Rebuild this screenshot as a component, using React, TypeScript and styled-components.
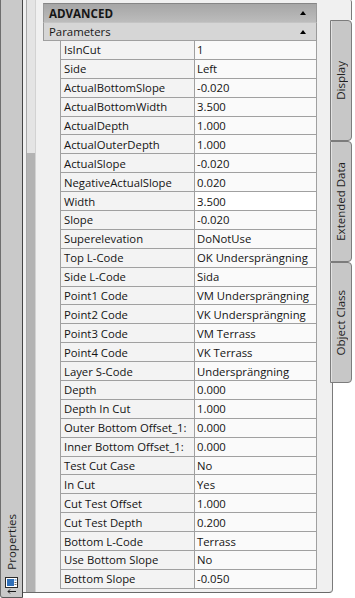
import React from 'react';
import styled, { createGlobalStyle } from 'styled-components';

const Global = createGlobalStyle`
  html, body { margin: 0; padding: 0; background: #ffffff; }
  body { font-family: "Open Sans", "Noto Sans", sans-serif; }
  * { box-sizing: border-box; }
`;

const Frame = styled.div`
  display: flex;
  width: 355px;
  height: 598px;
  overflow: hidden;
  background: #ffffff;
`;

const LeftStrip = styled.div`
  width: 23px;
  height: 598px;
  flex: none;
  background: #c9c9c9;
  border-left: 1px solid #6e6e6e;
  border-right: 1px solid #454545;
  border-bottom: 1px solid #5a5a5a;
  border-bottom-left-radius: 3px;
  display: flex;
  flex-direction: column;
  align-items: center;
  justify-content: flex-end;
  gap: 7px;
  padding-bottom: 3px;
`;

const VerticalLabel = styled.span`
  writing-mode: vertical-rl;
  transform: rotate(180deg);
  font-size: 11.5px;
  line-height: 14px;
  color: #1e1e1e;
`;

const Panel = styled.div`
  width: 310px;
  height: 593px;
  flex: none;
  background: #f0f0f0;
  border-right: 1px solid #7a7a7a;
  border-bottom: 1px solid #6a6a6a;
  border-bottom-right-radius: 4px;
  display: flex;
  padding-left: 3px;
`;

const ScrollTrack = styled.div`
  width: 10px;
  height: 592px;
  flex: none;
  margin-right: 7px;
  background: #e4e4e4;
  border-left: 1px solid #a8a8a8;
  border-right: 1px solid #d2d2d2;
  display: flex;
  flex-direction: column;
  padding-top: 153px;
`;

const ScrollThumb = styled.div`
  flex: 1;
  background: #b3b3b3;
`;

const Content = styled.div`
  width: 274px;
  flex: none;
  padding-top: 3px;
  display: flex;
  flex-direction: column;
`;

const SectionHeader = styled.div<{ $main?: boolean }>`
  height: 19px;
  display: flex;
  align-items: center;
  justify-content: space-between;
  padding: 0 10px 0 5px;
  font-size: ${p => (p.$main ? '11.6px' : '11.4px')};
  color: #161616;
  font-weight: ${p => (p.$main ? 700 : 400)};
  background: ${p => (p.$main ? 'linear-gradient(#a6a6a6, #bcbcbc)' : '#d6d6d6')};
  border-left: 1px solid #9a9a9a;
  border-right: 1px solid #9a9a9a;
  border-top: ${p => (p.$main ? '1px solid #858585' : '1px solid #c4c4c4')};
  border-bottom: ${p => (p.$main ? 'none' : '1px solid #a0a0a0')};
`;

const Caret = styled.span`
  width: 0;
  height: 0;
  border-left: 3.5px solid transparent;
  border-right: 3.5px solid transparent;
  border-bottom: 4px solid #000000;
`;

const Row = styled.div`
  display: flex;
  height: 18.9px;
  font-size: 11.3px;
  color: #141414;
`;

const Indent = styled.div`
  width: 17px;
  flex: none;
`;

const NameCell = styled.div`
  width: 134px;
  flex: none;
  background: #f3f3f3;
  border-left: 1px solid #a0a0a0;
  border-bottom: 1px solid #a0a0a0;
  padding-left: 3px;
  display: flex;
  align-items: center;
  white-space: nowrap;
  overflow: hidden;
`;

const ValueCell = styled.div<{ $bright?: boolean }>`
  flex: 1;
  background: ${p => (p.$bright ? '#ffffff' : '#fafafa')};
  border-left: 1px solid #a0a0a0;
  border-right: 1px solid #a0a0a0;
  border-bottom: 1px solid #a0a0a0;
  padding-left: 2px;
  display: flex;
  align-items: center;
  white-space: nowrap;
  overflow: hidden;
`;

const TabColumn = styled.div`
  width: 22px;
  flex: none;
  margin-left: -3px;
  display: flex;
  flex-direction: column;
`;

const TopCap = styled.div`
  height: 20px;
  background: #f0f0f0;
  border-right: 1px solid #7a7a7a;
  border-top-right-radius: 2px;
`;

const Tab = styled.div`
  height: 121px;
  background: #c7c7c7;
  border: 1px solid #7c7c7c;
  border-radius: 0 4px 4px 0;
  box-shadow: inset 1px 0 0 #e2e2e2;
  display: flex;
  align-items: center;
  justify-content: center;
`;

const rows: [string, string][] = [
  ['IsInCut', '1'],
  ['Side', 'Left'],
  ['ActualBottomSlope', '-0.020'],
  ['ActualBottomWidth', '3.500'],
  ['ActualDepth', '1.000'],
  ['ActualOuterDepth', '1.000'],
  ['ActualSlope', '-0.020'],
  ['NegativeActualSlope', '0.020'],
  ['Width', '3.500'],
  ['Slope', '-0.020'],
  ['Superelevation', 'DoNotUse'],
  ['Top L-Code', 'OK Undersprängning'],
  ['Side L-Code', 'Sida'],
  ['Point1 Code', 'VM Undersprängning'],
  ['Point2 Code', 'VK Undersprängning'],
  ['Point3 Code', 'VM Terrass'],
  ['Point4 Code', 'VK Terrass'],
  ['Layer S-Code', 'Undersprängning'],
  ['Depth', '0.000'],
  ['Depth In Cut', '1.000'],
  ['Outer Bottom Offset_1:', '0.000'],
  ['Inner Bottom Offset_1:', '0.000'],
  ['Test Cut Case', 'No'],
  ['In Cut', 'Yes'],
  ['Cut Test Offset', '1.000'],
  ['Cut Test Depth', '0.200'],
  ['Bottom L-Code', 'Terrass'],
  ['Use Bottom Slope', 'No'],
  ['Bottom Slope', '-0.050'],
];

const PropertiesIcon = () => (
  <svg width="13" height="17" viewBox="0 0 13 17">
    <rect x="0.5" y="0.5" width="12" height="10" fill="#ffffff" stroke="#2b2b2b" />
    <rect x="2" y="2" width="7" height="7" fill="#2f6fb8" />
    <rect x="9.5" y="2" width="2" height="2" fill="#9bbce0" />
    <rect x="9.5" y="5" width="2" height="1" fill="#6a6a6a" />
    <rect x="9.5" y="7" width="2" height="1" fill="#6a6a6a" />
    <path d="M3 14.5 H11" stroke="#1a1a1a" strokeWidth="1" />
    <path d="M5 12.5 L3 14.5 L5 16.5" stroke="#1a1a1a" strokeWidth="1" fill="none" />
  </svg>
);

export default function App() {
  return (
    <>
      <Global />
      <Frame>
        <LeftStrip>
          <VerticalLabel>Properties</VerticalLabel>
          <PropertiesIcon />
        </LeftStrip>
        <Panel>
          <ScrollTrack>
            <ScrollThumb />
          </ScrollTrack>
          <Content>
            <SectionHeader $main>
              <span>ADVANCED</span>
              <Caret />
            </SectionHeader>
            <SectionHeader>
              <span>Parameters</span>
              <Caret />
            </SectionHeader>
            {rows.map(([name, value]) => (
              <Row key={name}>
                <Indent />
                <NameCell>{name}</NameCell>
                <ValueCell $bright={name === 'Width'}>{value}</ValueCell>
              </Row>
            ))}
          </Content>
        </Panel>
        <TabColumn>
          <TopCap />
          <Tab><VerticalLabel>Display</VerticalLabel></Tab>
          <Tab><VerticalLabel>Extended Data</VerticalLabel></Tab>
          <Tab><VerticalLabel>Object Class</VerticalLabel></Tab>
        </TabColumn>
      </Frame>
    </>
  );
}
